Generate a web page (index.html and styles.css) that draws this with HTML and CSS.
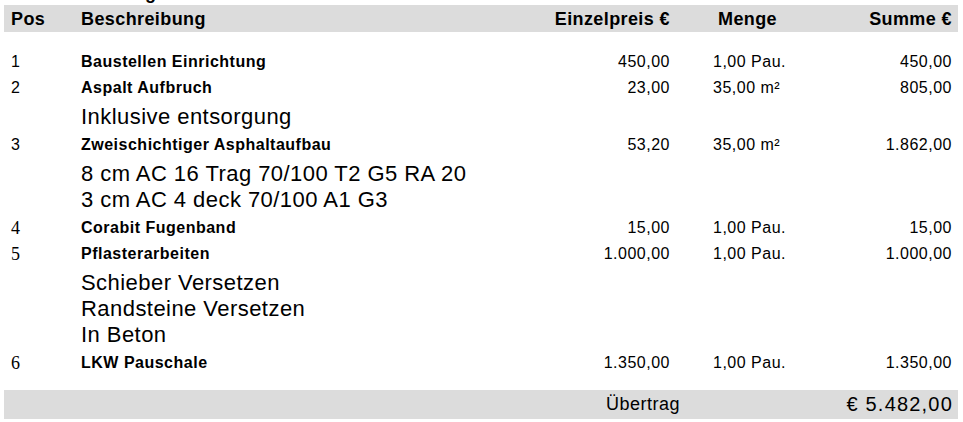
FILE: index.html
```
<!DOCTYPE html>
<html lang="de">
<head>
<meta charset="utf-8">
<title>Positionen</title>
<link rel="stylesheet" href="styles.css">
</head>
<body>
<div class="page">
  <div class="title">Leistung</div>
  <div class="grid head">
    <span>Pos</span>
    <span>Beschreibung</span>
    <span class="r">Einzelpreis €</span>
    <span class="qty-h">Menge</span>
    <span class="r">Summe €</span>
  </div>
  <div class="body">
    <div class="grid row">
      <span class="pos">1</span><span class="name">Baustellen Einrichtung</span><span class="r">450,00</span><span class="qty">1,00 Pau.</span><span class="r">450,00</span>
    </div>
    <div class="grid row">
      <span class="pos">2</span><span class="name">Aspalt Aufbruch</span><span class="r">23,00</span><span class="qty">35,00 m²</span><span class="r">805,00</span>
    </div>
    <div class="grid desc">
      <div class="text">Inklusive entsorgung</div>
    </div>
    <div class="grid row">
      <span class="pos">3</span><span class="name">Zweischichtiger Asphaltaufbau</span><span class="r">53,20</span><span class="qty">35,00 m²</span><span class="r">1.862,00</span>
    </div>
    <div class="grid desc">
      <div class="text">8 cm AC 16 Trag 70/100 T2 G5 RA 20<br>3 cm AC 4 deck 70/100 A1 G3</div>
    </div>
    <div class="grid row">
      <span class="pos serif">4</span><span class="name">Corabit Fugenband</span><span class="r">15,00</span><span class="qty">1,00 Pau.</span><span class="r">15,00</span>
    </div>
    <div class="grid row">
      <span class="pos serif">5</span><span class="name">Pflasterarbeiten</span><span class="r">1.000,00</span><span class="qty">1,00 Pau.</span><span class="r">1.000,00</span>
    </div>
    <div class="grid desc">
      <div class="text">Schieber Versetzen<br>Randsteine Versetzen<br>In Beton</div>
    </div>
    <div class="grid row">
      <span class="pos serif">6</span><span class="name">LKW Pauschale</span><span class="r">1.350,00</span><span class="qty">1,00 Pau.</span><span class="r">1.350,00</span>
    </div>
  </div>
  <div class="grid foot">
    <span class="carry">Übertrag</span>
    <span class="r total">€ 5.482,00</span>
  </div>
</div>
</body>
</html>
```
FILE: styles.css
```
html, body {
  margin: 0;
  padding: 0;
  background: #ffffff;
}

body {
  font-family: "Liberation Sans", Arial, sans-serif;
  color: #000000;
}

.page {
  padding: 0 5px 0 4px;
}

.title {
  margin-top: -17px;
  height: 20px;
  line-height: 20px;
  padding-left: 77px;
  font-size: 18px;
  font-weight: bold;
  white-space: nowrap;
}

.grid {
  display: grid;
  grid-template-columns: 70px 1fr 120px 163px 119px;
  padding: 0 6px 0 7px;
}

.r {
  text-align: right;
  white-space: nowrap;
}

.head {
  margin-top: 2px;
  background: #dcdcdc;
  height: 25px;
  padding-top: 2px;
  line-height: 25px;
  font-size: 18px;
  font-weight: bold;
  letter-spacing: 0.4px;
}

.qty-h {
  padding-left: 48px;
}

.body {
  padding: 17px 0 14px;
}

.row {
  font-size: 16px;
  line-height: 26px;
  height: 26px;
  letter-spacing: 0.5px;
  white-space: nowrap;
}

.pos {
  letter-spacing: 0;
}

.serif {
  font-family: "Liberation Serif", "Times New Roman", serif;
  font-size: 18px;
}

.name {
  font-weight: bold;
}

.qty {
  padding-left: 43px;
}

.desc {
  padding: 2.5px 6px 2.5px 7px;
}

.desc .text {
  grid-column: 2 / 6;
  font-size: 22px;
  line-height: 26px;
  letter-spacing: 0.45px;
  white-space: nowrap;
}

.foot {
  background: #dcdcdc;
  height: 29px;
  line-height: 29px;
  font-size: 18px;
  letter-spacing: 0.5px;
}

.carry {
  grid-column: 3 / 5;
  padding-left: 56px;
}

.foot .total {
  grid-column: 5;
  font-size: 20px;
  letter-spacing: 1.2px;
  margin-right: -1px;
}
```
